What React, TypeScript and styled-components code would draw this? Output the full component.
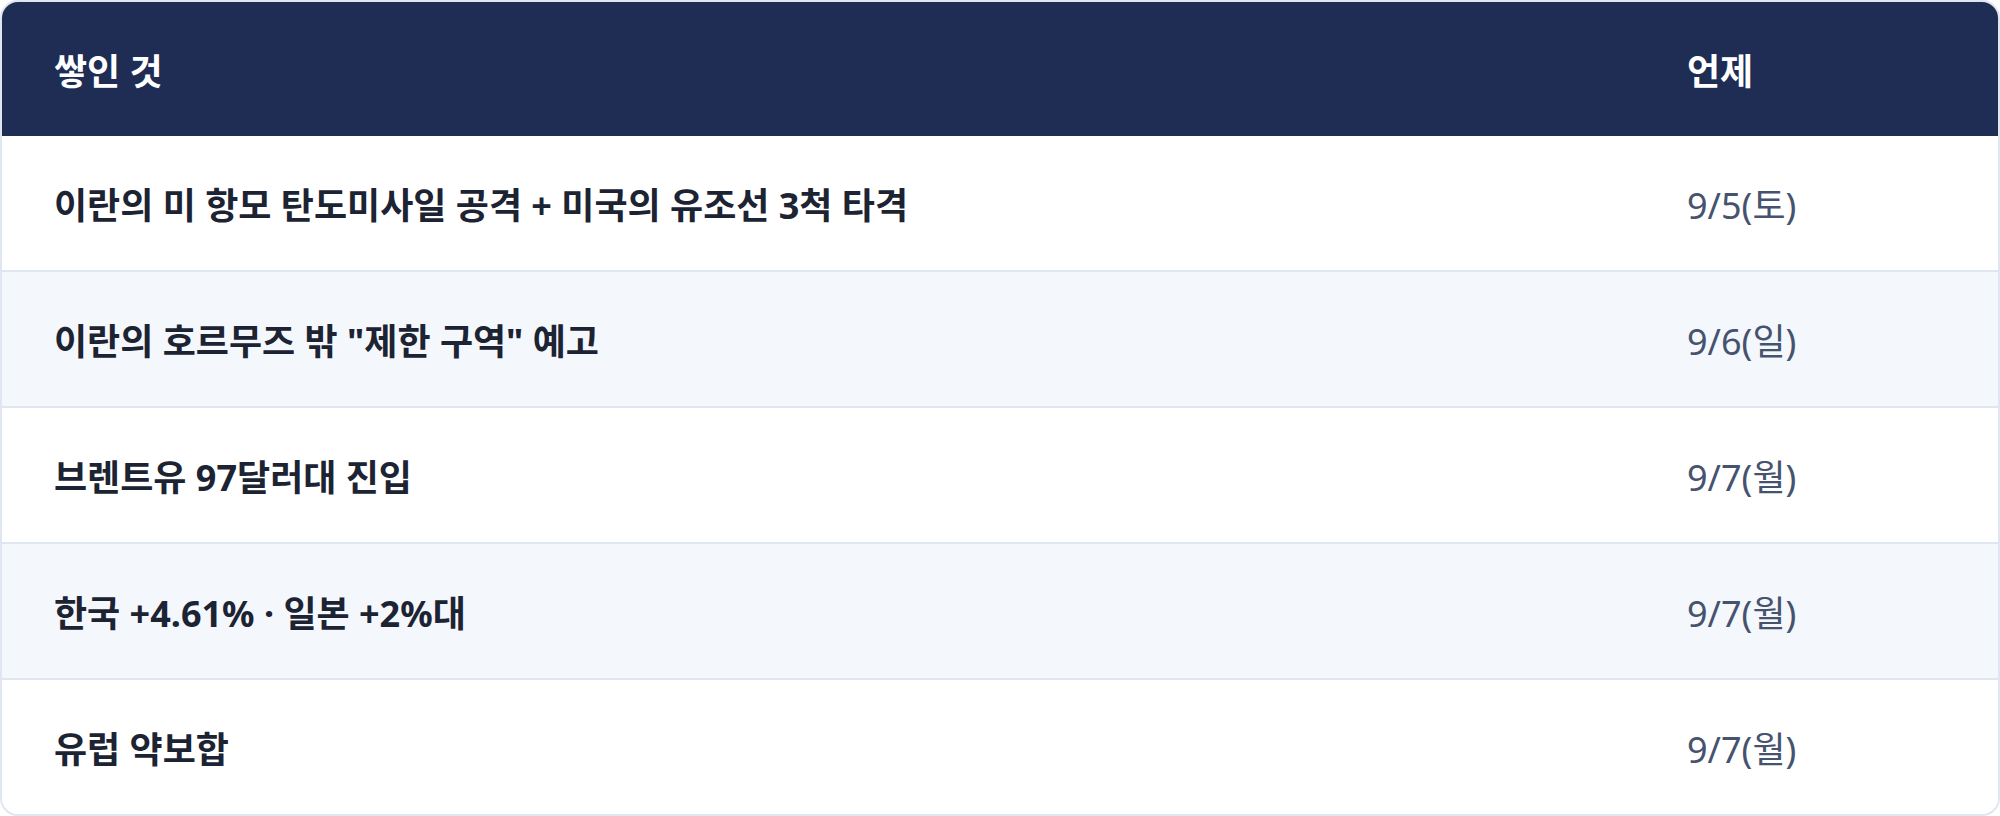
import styled, {createGlobalStyle} from "styled-components";

interface Item {
  what: string;
  when: string;
}

const items: Item[] = [
  {what: '이란의 미 항모 탄도미사일 공격 + 미국의 유조선 3척 타격', when: '9/5(토)'},
  {what: '이란의 호르무즈 밖 "제한 구역" 예고', when: '9/6(일)'},
  {what: '브렌트유 97달러대 진입', when: '9/7(월)'},
  {what: '한국 +4.61% · 일본 +2%대', when: '9/7(월)'},
  {what: '유럽 약보합', when: '9/7(월)'},
];

const App = () => {
  return (
    <>
      <GlobalStyle/>
      <Card>
        <HeadRow>
          <HeadCell>쌓인 것</HeadCell>
          <HeadCell>언제</HeadCell>
        </HeadRow>
        {items.map((item, i) => (
          <Row key={i} $alt={i % 2 === 1} $last={i === items.length - 1}>
            <WhatCell>{item.what}</WhatCell>
            <WhenCell>{item.when}</WhenCell>
          </Row>
        ))}
      </Card>
    </>
  )
}

export default App;

const GlobalStyle = createGlobalStyle`
  html, body {
    margin: 0;
    background: #ffffff;
  }
  body {
    font-family: "Noto Sans", "Noto Sans CJK KR", sans-serif;
  }
`;

const Card = styled.div`
  width: 2000px;
  box-sizing: border-box;
  border: 2px solid #dfe5f1;
  border-radius: 18px;
  overflow: hidden;
  background: #ffffff;
`;

const gridCols = `1fr 363px`;

const HeadRow = styled.div`
  display: grid;
  grid-template-columns: ${gridCols};
  align-items: center;
  height: 134px;
  background: #1f2c54;
`;

const HeadCell = styled.div`
  padding-left: 52px;
  color: #ffffff;
  font-size: 36px;
  font-weight: 700;
`;

const Row = styled.div<{ $alt: boolean; $last: boolean }>`
  display: grid;
  grid-template-columns: ${gridCols};
  align-items: center;
  height: 134px;
  background: ${p => p.$alt ? '#f4f7fc' : '#ffffff'};
  border-bottom: ${p => p.$last ? 'none' : '2px solid #dfe5f1'};
`;

const WhatCell = styled.div`
  padding-left: 52px;
  color: #1c2333;
  font-size: 36px;
  font-weight: 700;
`;

const WhenCell = styled.div`
  padding-left: 52px;
  color: #46536f;
  font-size: 36px;
  font-weight: 400;
`;
